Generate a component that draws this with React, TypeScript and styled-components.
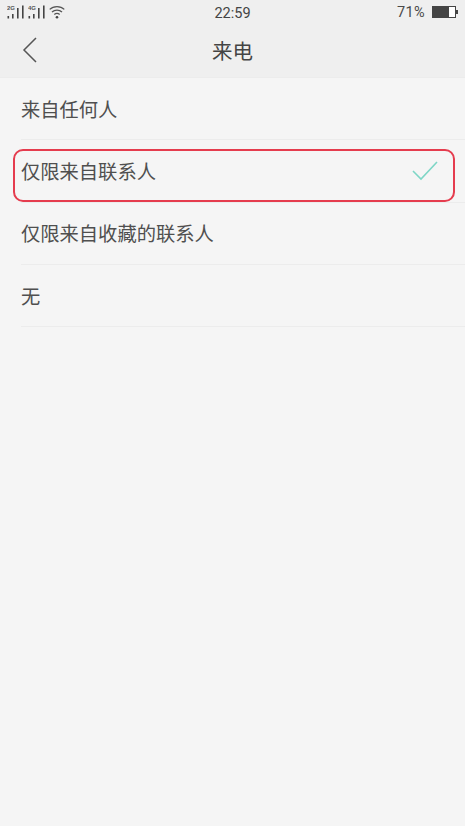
import React from 'react';
import styled, { createGlobalStyle } from 'styled-components';

const Global = createGlobalStyle`
  html, body {
    margin: 0;
    padding: 0;
    background: #f5f5f5;
  }
  * {
    box-sizing: border-box;
  }
`;

const Page = styled.div`
  position: relative;
  width: 465px;
  height: 826px;
  overflow: hidden;
  background: #f5f5f5;
  font-family: 'Noto Sans CJK SC', 'Liberation Sans', sans-serif;
`;

const TopArea = styled.div`
  height: 78px;
  background: #efefef;
  border-bottom: 1px solid #ececec;
`;

const StatusBar = styled.div`
  height: 26px;
  display: grid;
  grid-template-columns: 1fr auto 1fr;
  align-items: center;
  padding: 0 7px;
  color: #3c3c3c;
`;

const Signals = styled.div`
  display: flex;
  align-items: center;
  gap: 4px;
  margin-top: -3px;
`;

const Clock = styled.span`
  font-family: 'Roboto', 'Liberation Sans', sans-serif;
  font-size: 14.5px;
  color: #444;
`;

const BatteryGroup = styled.div`
  display: flex;
  justify-content: flex-end;
  align-items: center;
  gap: 7px;
  margin-top: -2px;
`;

const Percent = styled.span`
  font-family: 'Roboto', 'Liberation Sans', sans-serif;
  font-size: 14.5px;
  letter-spacing: 0.4px;
  color: #4a4a4a;
`;

const Header = styled.div`
  position: relative;
  height: 51px;
  display: flex;
  align-items: center;
  justify-content: center;
  padding-bottom: 3px;
`;

const BackButton = styled.div`
  position: absolute;
  left: 22px;
  top: 11px;
  line-height: 0;
`;

const Title = styled.h1`
  margin: 0;
  font-size: 20.5px;
  font-weight: 400;
  color: #444;
`;

const List = styled.div`
  display: flex;
  flex-direction: column;
`;

const Row = styled.div`
  height: 62.3px;
  margin-left: 21px;
  padding-right: 27px;
  display: flex;
  align-items: center;
  justify-content: space-between;
  border-bottom: 1px solid #ececec;
`;

const Label = styled.span`
  font-size: 19.3px;
  color: #4f4f4f;
`;

const Highlight = styled.div`
  position: absolute;
  left: 13px;
  top: 149px;
  width: 442px;
  height: 53px;
  border: 2px solid #e53c4e;
  border-radius: 10px;
  pointer-events: none;
`;

const Signal = ({ tag }: { tag: string }) => (
  <svg width="17" height="14" viewBox="0 0 17 14">
    <text x="0" y="5" fontSize="6" fontWeight="700" fontFamily="Liberation Sans" fill="#555">
      {tag}
    </text>
    <rect x="0.5" y="11" width="1.6" height="2.5" fill="#444" />
    <rect x="5" y="9" width="1.6" height="4.5" fill="#444" />
    <rect x="10" y="3" width="1.6" height="10.5" fill="#444" />
    <rect x="15" y="0.5" width="1.6" height="13" fill="#444" />
  </svg>
);

const Wifi = () => (
  <svg width="16" height="14" viewBox="0 0 16 14" fill="none" stroke="#555" strokeWidth="1.3">
    <path d="M0.7 4.4 C4.5 0.6 11.5 0.6 15.3 4.4" />
    <path d="M3 7 C5.8 4.4 10.2 4.4 13 7" />
    <path d="M5.3 9.5 C6.9 8.2 9.1 8.2 10.7 9.5" />
    <circle cx="8" cy="12.2" r="1.3" fill="#444" stroke="none" />
  </svg>
);

const Battery = () => (
  <svg width="26" height="12" viewBox="0 0 26 12">
    <rect x="0.5" y="0.5" width="23" height="11" fill="#fff" stroke="#444" />
    <rect x="1" y="1" width="16" height="10" fill="#444" />
    <rect x="24" y="4" width="2" height="4" fill="#444" />
  </svg>
);

const options = [
  { label: '来自任何人', checked: false },
  { label: '仅限来自联系人', checked: true },
  { label: '仅限来自收藏的联系人', checked: false },
  { label: '无', checked: false },
];

export default function App() {
  return (
    <Page>
      <Global />
      <TopArea>
        <StatusBar>
          <Signals>
            <Signal tag="2G" />
            <Signal tag="4G" />
            <Wifi />
          </Signals>
          <Clock>22:59</Clock>
          <BatteryGroup>
            <Percent>71%</Percent>
            <Battery />
          </BatteryGroup>
        </StatusBar>
        <Header>
          <BackButton>
            <svg width="16" height="26" viewBox="0 0 16 26" fill="none" stroke="#555" strokeWidth="1.5">
              <path d="M14 1 L2 13 L14 25" />
            </svg>
          </BackButton>
          <Title>来电</Title>
        </Header>
      </TopArea>
      <List>
        {options.map((o) => (
          <Row key={o.label}>
            <Label>{o.label}</Label>
            {o.checked && (
              <svg width="26" height="20" viewBox="0 0 26 20" fill="none" stroke="#7ed6c6" strokeWidth="1.6">
                <path d="M1 10 L9 18 L25 1" />
              </svg>
            )}
          </Row>
        ))}
      </List>
      <Highlight />
    </Page>
  );
}
